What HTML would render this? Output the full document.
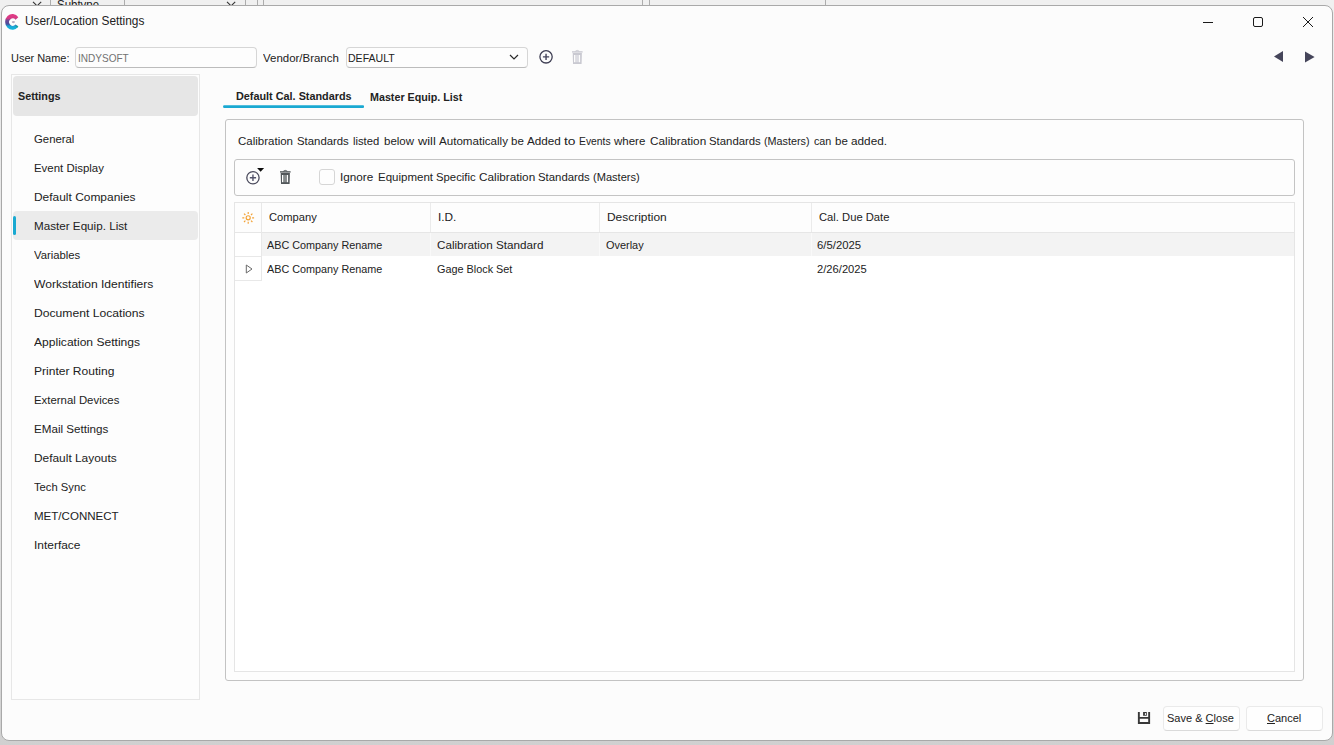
<!DOCTYPE html>
<html lang="en">
<head>
<meta charset="utf-8">
<title>User/Location Settings</title>
<style>
*{box-sizing:border-box;margin:0;padding:0}
html,body{width:1334px;height:745px;overflow:hidden}
body{position:relative;background:linear-gradient(to bottom,#ececec 0,#e2e2e2 70%,#d2d2d2 98%,#d0d0d0 100%);font-family:"Liberation Sans",sans-serif;font-size:11.5px;color:#222;-webkit-font-smoothing:antialiased}
.abs{position:absolute}
.t{position:absolute;white-space:nowrap;line-height:14px;height:14px;transform-origin:0 0}
.b{font-weight:bold}
/* background strip of underlying window */
#under{position:absolute;left:0;top:0;width:1334px;height:12px;background:#f0f0f0;overflow:hidden}
#under .vl{position:absolute;top:0;width:1px;height:6px;background:#adadad}
#win{position:absolute;left:1px;top:5px;width:1332px;height:736px;background:#fcfcfc;border:1px solid #a9a9a9;border-radius:8px}
.box{position:absolute;border:1px solid #d0d0d0;border-radius:4px;background:#fdfdfd}
.nav{position:absolute;left:34px}
</style>
</head>
<body>
<div id="under">
  <span class="t" id="u_sub" style="left:57px;top:-2px;font-size:12px;color:#222;transform:scaleX(.955)">Subtype</span>
  <svg class="abs" style="left:30px;top:0" width="16" height="6" viewBox="0 0 16 6"><path d="M3 1.9 L7.1 5.9 L11.2 1.9" fill="none" stroke="#333" stroke-width="1.1"/></svg>
  <svg class="abs" style="left:224px;top:0" width="16" height="6" viewBox="0 0 16 6"><path d="M3 1.9 L7.1 5.9 L11.2 1.9" fill="none" stroke="#333" stroke-width="1.1"/></svg>
  <i class="vl" style="left:50px"></i><i class="vl" style="left:124px"></i><i class="vl" style="left:245px"></i><i class="vl" style="left:257px"></i><i class="vl" style="left:263px"></i>
  <i class="vl" style="left:642px"></i><i class="vl" style="left:649px"></i><i class="vl" style="left:825px"></i>
</div>
<div id="win"></div>

<!-- title bar -->
<svg class="abs" id="logo" style="left:4px;top:13px" width="18" height="18" viewBox="0 0 18 18">
  <defs><linearGradient id="lg" gradientUnits="userSpaceOnUse" x1="0" y1="1" x2="0" y2="17"><stop offset="0" stop-color="#e23b86"/><stop offset="0.27" stop-color="#d63a84"/><stop offset="0.4" stop-color="#6f4a97"/><stop offset="0.62" stop-color="#4e4b99"/><stop offset="0.76" stop-color="#1ba6d5"/><stop offset="1" stop-color="#10bae0"/></linearGradient></defs>
  <path d="M14.3 4.2 A7.3 7.9 0 1 0 14.3 13.6 L11.6 11.5 A3.7 3.6 0 1 1 11.6 6.7 Z" fill="url(#lg)"/>
  <path d="M14.3 13.6 L12.7 12.35 L11.7 13.5 L13.2 14.9 Z" fill="#17a08f" opacity=".8"/>
  <ellipse cx="9.4" cy="9.1" rx="1.6" ry="1.1" fill="#b9afc2"/>
</svg>
<svg class="abs" style="left:1198px;top:12px" width="120" height="20" viewBox="0 0 120 20">
  <path d="M5 10.5 H15" stroke="#1a1a1a" stroke-width="1" fill="none"/>
  <rect x="55.5" y="5.5" width="9" height="9" rx="1.5" fill="none" stroke="#1a1a1a" stroke-width="1"/>
  <path d="M105 5 L115 15 M115 5 L105 15" stroke="#1a1a1a" stroke-width="1" fill="none"/>
</svg>

<!-- user row -->
<div class="box" style="left:75px;top:47px;width:182px;height:21px;border-color:#d6d6d6;border-bottom-color:#bcbcbc"></div>
<div class="box" style="left:346px;top:47px;width:182px;height:21px;border-color:#d6d6d6;border-bottom-color:#bcbcbc"></div>
<svg class="abs" style="left:508px;top:52px" width="12" height="10" viewBox="0 0 12 10"><path d="M2 3 L6 7 L10 3" fill="none" stroke="#2a2a2a" stroke-width="1.2"/></svg>
<svg class="abs" id="ic_plus1" style="left:538px;top:49px" width="16" height="16" viewBox="0 0 16 16"><circle cx="8.05" cy="7.85" r="6.15" fill="none" stroke="#3f3f54" stroke-width="1.3"/><path d="M8.05 4.7 V11 M4.9 7.85 H11.2" stroke="#45455c" stroke-width="1.4"/></svg>
<svg class="abs" id="ic_trash1" style="left:571.3px;top:49px" width="13" height="16" viewBox="0 0 13 16"><path d="M4.3 2.3 Q6.3 0.5 8.3 2.3" fill="none" stroke="#c9c9d1" stroke-width="1"/><rect x="1" y="2.2" width="10.6" height="1.4" fill="#c9c9d1"/><path d="M1.7 3.9 H10.9 L10.6 15 H2 Z" fill="#c9c9d1"/><rect x="4.2" y="6" width="3.7" height="7.2" fill="#dcdce2"/><rect x="3" y="6" width="1.2" height="7.2" fill="#fcfcfc"/><rect x="7.9" y="6" width="1.2" height="7.2" fill="#fcfcfc"/></svg>
<svg class="abs" style="left:1270px;top:49px" width="50" height="16" viewBox="0 0 50 16"><path d="M13 2 V13 L4 7.5 Z" fill="#45455a"/><path d="M35 2.4 V13.6 L44.6 8 Z" fill="#45455a"/></svg>

<!-- left panel -->
<div class="box" style="left:11px;top:74px;width:189px;height:626px;border-color:#e7e7e7;border-radius:0;background:#fdfdfd"></div>
<div class="abs" style="left:13px;top:76px;width:185px;height:40px;background:#e6e6e6;border-radius:4px"></div>
<div class="abs" style="left:13px;top:211px;width:185px;height:29px;background:#ebebeb;border-radius:4px"></div>
<div class="abs" style="left:13px;top:216px;width:3px;height:19px;background:#19a9d1;border-radius:2px"></div>

<!-- tabs -->
<svg class="abs" style="left:222px;top:104px" width="144" height="6" viewBox="0 0 144 6"><rect x="1.1" y="1.3" width="140.9" height="2.7" rx="1" fill="#1aa9d2"/></svg>

<!-- main panel -->
<div class="box" style="left:225px;top:119px;width:1079px;height:562px;border-color:#c3c3c3;border-radius:3px"></div>
<div class="box" style="left:234px;top:159px;width:1061px;height:37px;border-color:#c4c4c4;border-radius:3px"></div>
<svg class="abs" id="ic_plus2" style="left:245px;top:166px" width="22" height="20" viewBox="0 0 22 20"><circle cx="7.95" cy="11.75" r="6.15" fill="none" stroke="#4a4a5c" stroke-width="1.3"/><path d="M7.95 8.6 V14.9 M4.8 11.75 H11.1" stroke="#55556c" stroke-width="1.4"/><path d="M12.1 2.1 H19.1 L15.6 5.8 Z" fill="#0c0c0c"/></svg>
<svg class="abs" id="ic_trash2" style="left:279px;top:169px" width="13" height="16" viewBox="0 0 13 16"><path d="M4.3 2.3 Q6.3 0.5 8.3 2.3" fill="none" stroke="#52575a" stroke-width="1"/><rect x="1" y="2.2" width="10.6" height="1.4" fill="#52575a"/><path d="M1.7 3.9 H10.9 L10.6 15 H2 Z" fill="#52575a"/><rect x="4.2" y="6" width="3.7" height="7.2" fill="#858a8b"/><rect x="3" y="6" width="1.2" height="7.2" fill="#fdfdfd"/><rect x="7.9" y="6" width="1.2" height="7.2" fill="#fdfdfd"/></svg>
<div class="abs" style="left:319px;top:169px;width:16px;height:16px;border:1px solid #d6d6d6;border-radius:3px;background:#fefefe"></div>

<!-- grid -->
<div class="abs" id="grid" style="left:234px;top:202px;width:1061px;height:470px;border:1px solid #e5e5e5;background:#fff"></div>
<div class="abs" style="left:235px;top:203px;width:1059px;height:29px;background:#fdfdfd"></div>
<div class="abs" style="left:235px;top:232px;width:1059px;height:1px;background:#e6e6e6"></div>
<div class="abs" style="left:262px;top:233px;width:1032px;height:23px;background:#f3f3f3"></div>
<div class="abs" style="left:261px;top:203px;width:1px;height:78px;background:#e8e8e8"></div>
<div class="abs" style="left:235px;top:256px;width:27px;height:1px;background:#e8e8e8"></div>
<div class="abs" style="left:235px;top:280px;width:27px;height:1px;background:#e8e8e8"></div>
<div class="abs" style="left:430px;top:203px;width:1px;height:29px;background:#ebebeb"></div>
<div class="abs" style="left:599px;top:203px;width:1px;height:29px;background:#ebebeb"></div>
<div class="abs" style="left:811px;top:203px;width:1px;height:29px;background:#ebebeb"></div>
<div class="abs" style="left:430px;top:233px;width:1px;height:23px;background:#f9f9f9"></div>
<div class="abs" style="left:599px;top:233px;width:1px;height:23px;background:#f9f9f9"></div>
<div class="abs" style="left:811px;top:233px;width:1px;height:23px;background:#f9f9f9"></div>
<svg class="abs" id="ic_sun" style="left:241px;top:211px" width="14" height="14" viewBox="0 0 14 14"><g stroke="#f3a235" stroke-width="1.15" fill="none"><circle cx="7.2" cy="6.8" r="2.05"/><path d="M7.2 0.9 V2.9 M7.2 10.7 V12.7 M1.3 6.8 H3.3 M11.1 6.8 H13.1 M3 2.6 L4.4 4 M10 9.6 L11.4 11 M3 11 L4.4 9.6 M10 4 L11.4 2.6"/></g></svg>
<svg class="abs" id="ic_arrow" style="left:245px;top:264px" width="9" height="10" viewBox="0 0 9 10"><path d="M1.3 1 V9 L7 5 Z" fill="none" stroke="#6a6a6a" stroke-width="1"/></svg>

<!-- footer -->
<svg class="abs" id="ic_save" style="left:1137px;top:711px" width="15" height="15" viewBox="0 0 15 15"><path fill="#383838" fill-rule="evenodd" d="M0.9 1 H2.8 V6.1 H11.2 V1 H13.1 V12.9 H0.9 Z M2.8 7.8 V11.1 H11.2 V7.8 Z M6.1 1 H9.8 V4.8 H6.1 Z M7.9 2 V4 H8.9 V2 Z"/></svg>
<div class="box" style="left:1163px;top:706px;width:77px;height:25px;border-color:#eaeaea;border-bottom-color:#dadada;background:#fefefe"></div>
<div class="box" style="left:1246px;top:706px;width:77px;height:25px;border-color:#eaeaea;border-bottom-color:#dadada;background:#fefefe"></div>
<span class="t" id="t_title" style="left:25.00px;top:14.00px;font-size:12.3px;transform:scaleX(0.9649);">User/Location Settings</span>
<span class="t" id="t_user" style="left:11.00px;top:51.00px;font-size:11.5px;transform:scaleX(0.9530);">User Name:</span>
<span class="t" id="t_indy" style="left:78.00px;top:51.00px;font-size:11.5px;transform:scaleX(0.8723);color:#727272">INDYSOFT</span>
<span class="t" id="t_vendor" style="left:263.00px;top:51.00px;font-size:11.5px;transform:scaleX(0.9967);">Vendor/Branch</span>
<span class="t" id="t_default" style="left:348.00px;top:51.00px;font-size:11.5px;transform:scaleX(0.9167);">DEFAULT</span>
<span class="t" id="t_settings" style="left:18.00px;top:89.00px;font-size:11.8px;transform:scaleX(0.9130);font-weight:bold">Settings</span>
<span class="t" id="n0" style="left:34.00px;top:132.00px;font-size:11.5px;transform:scaleX(0.9863);">General</span>
<span class="t" id="n1" style="left:34.00px;top:161.00px;font-size:11.5px;transform:scaleX(0.9935);">Event Display</span>
<span class="t" id="n2" style="left:34.00px;top:190.00px;font-size:11.5px;transform:scaleX(1.0383);">Default Companies</span>
<span class="t" id="n3" style="left:34.00px;top:219.00px;font-size:11.5px;transform:scaleX(1.0137);">Master Equip. List</span>
<span class="t" id="n4" style="left:34.00px;top:248.00px;font-size:11.5px;transform:scaleX(0.9820);">Variables</span>
<span class="t" id="n5" style="left:34.00px;top:277.00px;font-size:11.5px;transform:scaleX(1.0513);">Workstation Identifiers</span>
<span class="t" id="n6" style="left:34.00px;top:306.00px;font-size:11.5px;transform:scaleX(1.0555);">Document Locations</span>
<span class="t" id="n7" style="left:34.00px;top:335.00px;font-size:11.5px;transform:scaleX(1.0497);">Application Settings</span>
<span class="t" id="n8" style="left:34.00px;top:364.00px;font-size:11.5px;transform:scaleX(1.0482);">Printer Routing</span>
<span class="t" id="n9" style="left:34.00px;top:393.00px;font-size:11.5px;transform:scaleX(0.9895);">External Devices</span>
<span class="t" id="n10" style="left:34.00px;top:422.00px;font-size:11.5px;transform:scaleX(1.0117);">EMail Settings</span>
<span class="t" id="n11" style="left:34.00px;top:451.00px;font-size:11.5px;transform:scaleX(1.0342);">Default Layouts</span>
<span class="t" id="n12" style="left:34.00px;top:480.00px;font-size:11.5px;transform:scaleX(0.9752);">Tech Sync</span>
<span class="t" id="n13" style="left:34.00px;top:509.00px;font-size:11.5px;transform:scaleX(1.0035);">MET/CONNECT</span>
<span class="t" id="n14" style="left:34.00px;top:538.00px;font-size:11.5px;transform:scaleX(1.0382);">Interface</span>
<span class="t" id="t_tab1" style="left:236.00px;top:89.00px;font-size:11.5px;transform:scaleX(0.9425);font-weight:bold">Default Cal. Standards</span>
<span class="t" id="t_tab2" style="left:370.00px;top:90.00px;font-size:11.5px;transform:scaleX(0.9324);font-weight:bold">Master Equip. List</span>
<span class="t" id="h0" style="left:269.00px;top:210.00px;font-size:11.5px;transform:scaleX(0.9712);">Company</span>
<span class="t" id="h1" style="left:438.00px;top:210.00px;font-size:11.5px;transform:scaleX(1.0284);">I.D.</span>
<span class="t" id="h2" style="left:607.00px;top:210.00px;font-size:11.5px;transform:scaleX(1.0384);">Description</span>
<span class="t" id="h3" style="left:819.00px;top:210.00px;font-size:11.5px;transform:scaleX(0.9747);">Cal. Due Date</span>
<span class="t" id="r0c0" style="left:267.00px;top:238.00px;font-size:11.5px;transform:scaleX(0.9396);">ABC Company Rename</span>
<span class="t" id="r0c1" style="left:437.00px;top:238.00px;font-size:11.5px;transform:scaleX(1.0146);">Calibration Standard</span>
<span class="t" id="r0c2" style="left:606.00px;top:238.00px;font-size:11.5px;transform:scaleX(0.9500);">Overlay</span>
<span class="t" id="r0c3" style="left:817.00px;top:238.00px;font-size:11.5px;transform:scaleX(0.9841);">6/5/2025</span>
<span class="t" id="r1c0" style="left:267.00px;top:262.00px;font-size:11.5px;transform:scaleX(0.9396);">ABC Company Rename</span>
<span class="t" id="r1c1" style="left:437.00px;top:262.00px;font-size:11.5px;transform:scaleX(0.9432);">Gage Block Set</span>
<span class="t" id="r1c3" style="left:817.00px;top:262.00px;font-size:11.5px;transform:scaleX(0.9726);">2/26/2025</span>
<span class="t" id="t_save" style="left:1167.00px;top:711.00px;font-size:11.5px;transform:scaleX(0.9587);">Save &amp; <u>C</u>lose</span>
<span class="t" id="t_cancel" style="left:1267.00px;top:711.00px;font-size:11.5px;transform:scaleX(0.9580);"><u>C</u>ancel</span>
<span class="t pa" id="d0" style="left:238.00px;top:134.00px;font-size:11.5px;transform:scaleX(1.0000);">Calibration</span>
<span class="t pb" id="d1" style="left:297.00px;top:134.00px;font-size:11.5px;transform:scaleX(0.9882);">Standards</span>
<span class="t pa" id="d2" style="left:353.00px;top:134.00px;font-size:11.5px;transform:scaleX(0.9778);">listed</span>
<span class="t pb" id="d3" style="left:384.00px;top:134.00px;font-size:11.5px;transform:scaleX(1.0000);">below</span>
<span class="t pa" id="d4" style="left:418.00px;top:134.00px;font-size:11.5px;transform:scaleX(1.1129);">will</span>
<span class="t pb" id="d5" style="left:439.00px;top:134.00px;font-size:11.5px;transform:scaleX(1.0088);">Automatically</span>
<span class="t pa" id="d6" style="left:511.00px;top:134.00px;font-size:11.5px;transform:scaleX(1.0000);">be</span>
<span class="t pb" id="d7" style="left:527.00px;top:134.00px;font-size:11.5px;transform:scaleX(1.0182);">Added</span>
<span class="t pa" id="d8" style="left:564.00px;top:134.00px;font-size:11.5px;transform:scaleX(1.2013);">to</span>
<span class="t pb" id="d9" style="left:579.00px;top:134.00px;font-size:11.5px;transform:scaleX(0.8976);">Events</span>
<span class="t pa" id="d10" style="left:614.00px;top:134.00px;font-size:11.5px;transform:scaleX(1.0000);">where</span>
<span class="t pb" id="d11" style="left:650.00px;top:134.00px;font-size:11.5px;transform:scaleX(1.0219);">Calibration</span>
<span class="t pa" id="d12" style="left:709.00px;top:134.00px;font-size:11.5px;transform:scaleX(0.9882);">Standards</span>
<span class="t pb" id="d13" style="left:764.00px;top:134.00px;font-size:11.5px;transform:scaleX(0.9376);">(Masters)</span>
<span class="t pa" id="d14" style="left:814.00px;top:134.00px;font-size:11.5px;transform:scaleX(0.9344);">can</span>
<span class="t pb" id="d15" style="left:835.00px;top:134.00px;font-size:11.5px;transform:scaleX(1.0000);">be</span>
<span class="t pa" id="d16" style="left:851.00px;top:134.00px;font-size:11.5px;transform:scaleX(1.0231);">added.</span>
<span class="t pa" id="g0" style="left:340.00px;top:170.00px;font-size:11.5px;transform:scaleX(1.0194);">Ignore</span>
<span class="t pb" id="g1" style="left:378.00px;top:170.00px;font-size:11.5px;transform:scaleX(1.0000);">Equipment</span>
<span class="t pa" id="g2" style="left:436.00px;top:170.00px;font-size:11.5px;transform:scaleX(0.9846);">Specific</span>
<span class="t pb" id="g3" style="left:479.00px;top:170.00px;font-size:11.5px;transform:scaleX(1.0219);">Calibration</span>
<span class="t pa" id="g4" style="left:538.00px;top:170.00px;font-size:11.5px;transform:scaleX(0.9882);">Standards</span>
<span class="t pb" id="g5" style="left:593.00px;top:170.00px;font-size:11.5px;transform:scaleX(0.9626);">(Masters)</span>
</body>
</html>
